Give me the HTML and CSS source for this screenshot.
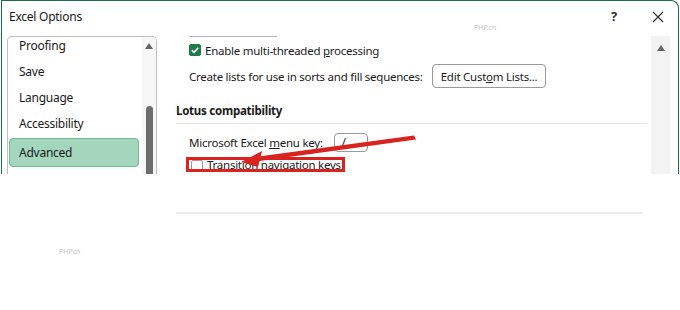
FILE: index.html
```html
<!DOCTYPE html>
<html lang="en">

<head>
    <meta charset="UTF-8">
    <meta name="viewport" content="width=device-width, initial-scale=1.0">
    <title>Excel Options</title>
    <link rel="stylesheet" href="styles.css">
</head>

<body>

    <div class="dialog">
        <div class="titlebar">
            <span class="title">Excel Options</span>
            <span class="help">?</span>
            <svg class="close" width="12" height="12" viewBox="0 0 12 12">
                <path d="M1,1 L11,11 M11,1 L1,11" stroke="#333" stroke-width="1.2" fill="none"></path>
            </svg>
        </div>

        <div class="main">
            <div class="nav">
                <div class="nav-list">
                    <div class="nav-item">Proofing</div>
                    <div class="nav-item">Save</div>
                    <div class="nav-item">Language</div>
                    <div class="nav-item">Accessibility</div>
                    <div class="nav-item selected">Advanced</div>
                </div>
                <div class="nav-scroll">
                    <span class="arrow-up"></span>
                    <span class="thumb"></span>
                </div>
            </div>

            <div class="content">
                <div class="cut-line"></div>
                <div class="row">
                    <span class="checkbox checked">
                        <svg width="12" height="12" viewBox="0 0 12 12">
                            <path d="M2.8,6.2 L5,8.3 L9.3,3.8" stroke="#fff" stroke-width="1.6" fill="none"></path>
                        </svg>
                    </span>
                    <span>Enable multi-threaded <u>p</u>rocessing</span>
                </div>
                <div class="row">
                    <span>Create lists for use in sorts and fill sequences:</span>
                    <span class="button">Edit Cust<u>o</u>m Lists...</span>
                </div>

                <div class="section-title">Lotus compatibility</div>

                <div class="row">
                    <span>Microsoft Excel <u>m</u>enu key:</span>
                    <span class="keybox">/</span>
                </div>
                <div class="row highlight">
                    <span class="checkbox"></span>
                    <span class="hl-text">Transition navigation keys</span>
                </div>
            </div>

            <div class="vscroll">
                <span class="arrow-up"></span>
            </div>
        </div>
    </div>

    <div class="below">
        <div class="below-line"></div>
    </div>

    <svg class="annotation" width="680" height="310">
        <polygon points="414,135.5 416,139.5 256,161.5 255,157" fill="#d8231f"></polygon>
        <polygon points="241,162 262,151 258,167" fill="#d8231f"></polygon>
    </svg>

    <span class="watermark wm1">PHP.cn</span>
    <span class="watermark wm2">PHPcn</span>

</body>

</html>
```

FILE: styles.css
```css
body {
    margin: 0;
    width: 680px;
    height: 310px;
    background: #fff;
    font-family: "Noto Sans", "Open Sans", sans-serif;
    font-size: 11.5px;
    letter-spacing: -0.25px;
    color: #1a1a1a;
    position: relative;
    overflow: hidden;
}

.dialog {
    width: 676px;
    height: 173px;
    margin-left: 1px;
    border: 1px solid #1e6e48;
    border-bottom: none;
    border-top-right-radius: 8px;
    display: flex;
    flex-direction: column;
    overflow: hidden;
}

.titlebar {
    height: 30px;
    display: flex;
    align-items: center;
    padding-left: 7px;
    padding-right: 14px;
}

.title {
    flex: 1;
    margin-top: 1px;
    font-size: 12px;
}

.help {
    font-size: 13px;
    font-weight: bold;
    color: #333;
    margin-right: 35px;
}

.close {
    margin-top: 1px;
}

.main {
    flex: 1;
    display: flex;
    padding-top: 5px;
}

.nav {
    width: 148px;
    margin-left: 5px;
    border: 1px solid #bfbfbf;
    border-bottom: none;
    border-radius: 5px 5px 0 0;
    display: flex;
    overflow: hidden;
}

.nav-list {
    flex: 1;
    margin-top: -4px;
}

.nav-item {
    height: 26px;
    line-height: 26px;
    padding-left: 10px;
    margin-left: 1px;
    font-size: 12px;
}

.nav-item.selected {
    margin-top: 1px;
    margin-right: 3px;
    height: 27px;
    line-height: 27px;
    padding-left: 9px;
    background: #a3d6bd;
    border: 1px solid #72b594;
    border-radius: 4px;
}

.nav-scroll {
    width: 14px;
    background: #f7f7f7;
    display: flex;
    flex-direction: column;
    align-items: center;
}

.arrow-up {
    margin-top: 6px;
    width: 0;
    height: 0;
    border-left: 4px solid transparent;
    border-right: 4px solid transparent;
    border-bottom: 6px solid #666;
}

.thumb {
    margin-top: 57px;
    width: 7px;
    flex: 1;
    background: #6d6d6d;
    border-radius: 4px 4px 0 0;
}

.content {
    flex: 1;
    padding-left: 19px;
    padding-right: 4px;
    padding-top: 0;
}

.cut-line {
    width: 88px;
    height: 1px;
    margin-left: 13px;
    background: #b5b5b5;
}

.row {
    display: flex;
    align-items: center;
    padding-left: 13px;
}

.row:nth-child(2) {
    margin-top: 5px;
    height: 16px;
}

.row:nth-child(3) {
    margin-top: 6px;
    height: 24px;
}

.checkbox {
    flex: none;
    width: 12px;
    height: 12px;
    box-sizing: border-box;
    border: 1px solid #555;
    border-radius: 2px;
    margin-right: 4px;
    background: #fff;
}

.checkbox.checked {
    background: #1f7a4c;
    border-color: #1f7a4c;
}

.checkbox svg {
    display: block;
    margin: -1px;
}

.button {
    margin-left: 9px;
    height: 22px;
    padding: 0 8px;
    border: 1px solid #9a9a9a;
    border-radius: 4px;
    display: flex;
    align-items: center;
}

.section-title {
    font-weight: bold;
    margin-top: 13px;
    height: 22px;
    line-height: 20px;
    border-bottom: 1px solid #e6e6e6;
}

.section-title + .row {
    margin-top: 8px;
    height: 20px;
}

.keybox {
    margin-left: 11px;
    width: 34px;
    height: 19px;
    box-sizing: border-box;
    border: 1px solid #999;
    border-radius: 4px;
    padding-left: 7px;
    line-height: 16px;
}

.row.highlight {
    margin-top: 5px;
    margin-left: 10px;
    padding-left: 2px;
    width: 151px;
    height: 9px;
    border: 3px solid #d8231f;
    overflow: hidden;
    align-items: flex-start;
}

.row.highlight .checkbox {
    margin-top: 0;
    border-color: #999;
}

.hl-text {
    line-height: 12px;
    margin-top: -1px;
}

.vscroll {
    width: 19px;
    margin-right: 8px;
    background: #f3f3f3;
    display: flex;
    flex-direction: column;
    align-items: center;
}

.vscroll .arrow-up {
    margin-top: 9px;
}

.below {
    padding-top: 38px;
    padding-left: 176px;
}

.below-line {
    width: 467px;
    height: 2px;
    background: #ececec;
}

.annotation {
    position: absolute;
    top: 0;
    left: 0;
    pointer-events: none;
}

.watermark {
    position: absolute;
    font-size: 7px;
    letter-spacing: 0;
    color: #c4c4c4;
}

.wm1 {
    left: 474px;
    top: 23px;
}

.wm2 {
    left: 59px;
    top: 247px;
}
```
